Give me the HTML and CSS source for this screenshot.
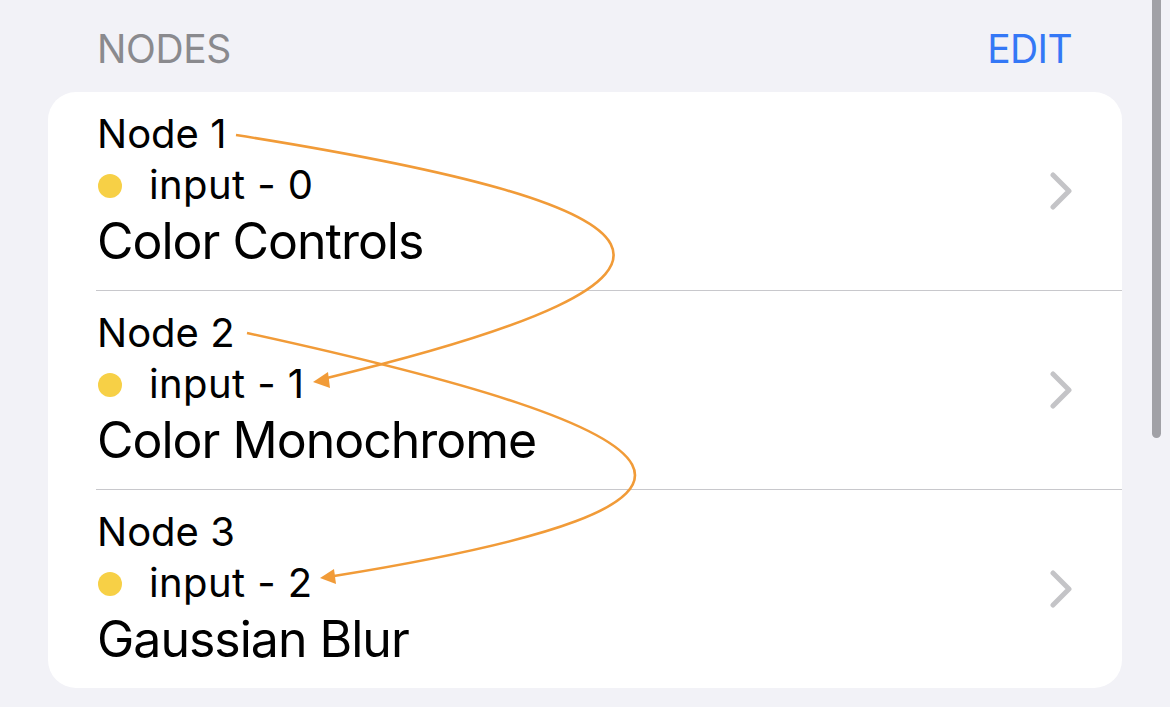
FILE: index.html
```html
<!DOCTYPE html>
<html>
<head>
<meta charset="utf-8">
<link rel="stylesheet" href="styles.css">
</head>
<body>
<div class="page">
  <div class="section-header">
    <span class="section-title">NODES</span>
    <span class="edit">EDIT</span>
  </div>
  <div class="card">
    <div class="row">
      <div class="row-text">
        <div class="node-label">Node 1</div>
        <div class="input-line"><span class="dot"></span><span>input - 0</span></div>
        <div class="title">Color Controls</div>
      </div>
      <svg class="chevron" width="22" height="38" viewBox="0 0 22 38"><polyline points="3,3 19,19 3,35" /></svg>
    </div>
    <div class="row">
      <div class="row-text">
        <div class="node-label">Node 2</div>
        <div class="input-line"><span class="dot"></span><span>input - 1</span></div>
        <div class="title">Color Monochrome</div>
      </div>
      <svg class="chevron" width="22" height="38" viewBox="0 0 22 38"><polyline points="3,3 19,19 3,35" /></svg>
    </div>
    <div class="row">
      <div class="row-text">
        <div class="node-label">Node 3</div>
        <div class="input-line"><span class="dot"></span><span>input - 2</span></div>
        <div class="title">Gaussian Blur</div>
      </div>
      <svg class="chevron" width="22" height="38" viewBox="0 0 22 38"><polyline points="3,3 19,19 3,35" /></svg>
    </div>
  </div>
  <svg class="links" width="1170" height="707" viewBox="0 0 1170 707">
    <path class="link" d="M236,135 C684,206 757,274 327,378" />
    <polygon class="head" points="313,382 328,372 330,388" />
    <path class="link" d="M247,333 C706,433 786,503 334,576" />
    <polygon class="head" points="320,578 334,569 336,584" />
  </svg>
  <div class="scroll-indicator"></div>
</div>
</body>
</html>
```

FILE: styles.css
```css
html, body {
  margin: 0;
  padding: 0;
  background: #f2f2f7;
}

.page {
  position: relative;
  width: 1170px;
  height: 707px;
  overflow: hidden;
  box-sizing: border-box;
  padding: 0 48px;
  font-family: Inter, "Noto Sans", "Liberation Sans", sans-serif;
  color: #000;
}

.section-header {
  display: flex;
  justify-content: space-between;
  align-items: flex-end;
  height: 92px;
  box-sizing: border-box;
  padding: 0 50px 19px 49px;
  font-size: 39px;
  line-height: 48px;
}

.section-title {
  color: #8a8a8e;
  letter-spacing: -0.4px;
}

.edit {
  color: #3478f6;
  letter-spacing: -0.6px;
}

.card {
  background: #fff;
  border-radius: 28px;
  overflow: hidden;
}

.row {
  display: flex;
  align-items: center;
  justify-content: space-between;
  margin-left: 48px;
  padding: 18px 50px 19px 1px;
  border-top: 1px solid #c8c8cc;
}

.row:first-child {
  border-top: none;
}

.row-text {
  display: flex;
  flex-direction: column;
}

.node-label {
  font-size: 40px;
  line-height: 48px;
}

.input-line {
  display: flex;
  align-items: center;
  font-size: 40px;
  line-height: 53px;
  letter-spacing: 0.4px;
}

.dot {
  width: 24px;
  height: 24px;
  border-radius: 50%;
  background: #f7d046;
  margin: 2px 27px 0 1px;
}

.title {
  font-size: 50px;
  line-height: 60px;
  letter-spacing: -1px;
}

.chevron {
  fill: none;
  stroke: #c4c4c7;
  stroke-width: 5;
  stroke-linecap: round;
  stroke-linejoin: round;
}

.links {
  position: absolute;
  left: 0;
  top: 0;
  pointer-events: none;
}

.link {
  fill: none;
  stroke: #f19b38;
  stroke-width: 2.6;
}

.head {
  fill: #f19b38;
}

.scroll-indicator {
  position: absolute;
  right: 9px;
  top: -10px;
  width: 9px;
  height: 448px;
  border-radius: 5px;
  background: #a1a1a6;
}
```
